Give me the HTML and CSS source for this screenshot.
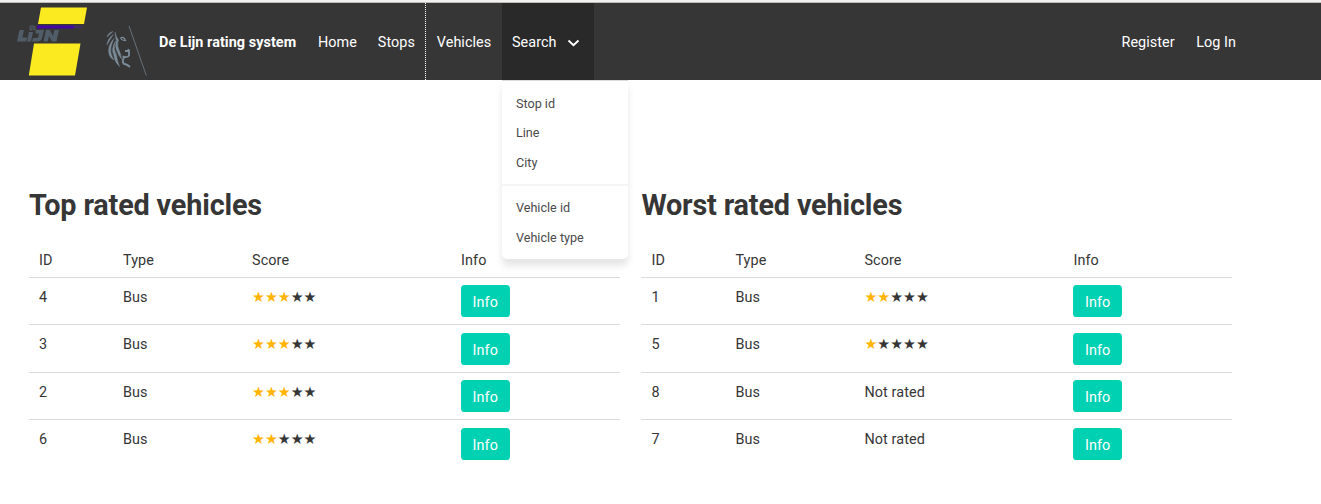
FILE: index.html
```html
<!DOCTYPE html>
<html lang="en">
<head>
<meta charset="utf-8">
<title>De Lijn rating system</title>
<link rel="stylesheet" href="styles.css">
</head>
<body>
<nav class="navbar">
  <svg class="logo" width="149" height="77" viewBox="0 3 149 77">
    <path fill="#fcea20" d="M41 7.500H87L84 24H38zM34 43.500H80.500L75 75.500H28.800z"/>
    <path stroke="#4507a3" stroke-width="3" d="M37 27H74"/>
    <path stroke="#412c67" stroke-width="2" d="M74 27H82"/>
    <g fill="#505d68">
      <path d="M19.500 30H24L22.300 37.500H27L26.200 41.500H17zM29 32H33L31 41.500H27zM36 30H44L42 38Q41 41.500 37.500 41.500H32L33 38H36.500Q38 38 38.300 36.500L39 33.500H35.500zM46 30H50L53 36L54.400 30H59L56.500 41.500H52L49 36L47.800 41.500H43.500z"/>
      <path d="M29.500 28.800h3v1.500h-3zM33.500 28.800h2.500v1.500h-2.500z"/>
    </g>
    <path fill="none" stroke="#505d68" d="M30 26h4v2h-4zM35 26v2"/>
    <g fill="#7c8b98" stroke="#7c8b98" stroke-width=".4">
      <path d="M113 31.500Q108 32.500 107.200 37Q109.500 34.500 113 31.500M113.500 34.500Q107.500 38.500 107 45Q109 41 113.500 34.500M114 38.500Q107 46 109 54Q110 58 114 60Q109.500 53 111 47Q112 43 114 38.500"/>
      <path d="M115.500 41Q110.500 49 114 56Q114.500 62 119.500 66.500Q117 60 116.500 55Q113 49 115.500 41M115 32Q116 37 118.500 40Q116.500 45 119 50Q121 54 121.500 59Q118 55 117 51Q114.500 46 116.500 41Q115 37 115 32"/>
    </g>
    <path fill="none" stroke="#7c8b98" stroke-width="1.200" d="M120.500 38Q124 36 125.500 40.500Q122 41 120.500 38"/>
    <path fill="none" stroke="#7c8b98" stroke-width="1.900" d="M128.500 49V51H125M129 50V55.500Q128 58 122.500 56.500M124 58Q121.500 61 124 64Q126 63.500 130 67"/>
    <path stroke="#65717b" fill="none" d="M129 26L146.300 75.500"/>
  </svg>
  <a class="item brand">De Lijn rating system</a>
  <a class="item home">Home</a>
  <a class="item stops">Stops</a>
  <a class="item vehicles">Vehicles</a>
  <div class="search">
    <a class="item search-link">Search
      <svg class="chevron" width="13" height="9" viewBox="0 0 13 9"><path d="M1.500 1.500L6.500 6.300L11.500 1.500" fill="none" stroke="#fff" stroke-width="1.900"/></svg>
    </a>
    <div class="dropdown">
      <a>Stop id</a><a>Line</a><a>City</a>
      <hr>
      <a>Vehicle id</a><a>Vehicle type</a>
    </div>
  </div>
  <div class="account">
    <a class="item">Register</a>
    <a class="item">Log In</a>
  </div>
</nav>
<main class="columns">
  <section>
    <h2>Top rated vehicles</h2>
    <table>
      <tr><th class="id">ID</th><th class="type">Type</th><th class="score">Score</th><th>Info</th></tr>
      <tr><td>4</td><td>Bus</td><td><span class="stars"><b>★★★</b>★★</span></td><td class="action"><a class="button">Info</a></td></tr>
      <tr><td>3</td><td>Bus</td><td><span class="stars"><b>★★★</b>★★</span></td><td class="action"><a class="button">Info</a></td></tr>
      <tr><td>2</td><td>Bus</td><td><span class="stars"><b>★★★</b>★★</span></td><td class="action"><a class="button">Info</a></td></tr>
      <tr><td>6</td><td>Bus</td><td><span class="stars"><b>★★</b>★★★</span></td><td class="action"><a class="button">Info</a></td></tr>
    </table>
  </section>
  <section>
    <h2>Worst rated vehicles</h2>
    <table>
      <tr><th class="id">ID</th><th class="type">Type</th><th class="score">Score</th><th>Info</th></tr>
      <tr><td>1</td><td>Bus</td><td><span class="stars"><b>★★</b>★★★</span></td><td class="action"><a class="button">Info</a></td></tr>
      <tr><td>5</td><td>Bus</td><td><span class="stars"><b>★</b>★★★★</span></td><td class="action"><a class="button">Info</a></td></tr>
      <tr><td>8</td><td>Bus</td><td>Not rated</td><td class="action"><a class="button">Info</a></td></tr>
      <tr><td>7</td><td>Bus</td><td>Not rated</td><td class="action"><a class="button">Info</a></td></tr>
    </table>
  </section>
</main>
</body>
</html>
```
FILE: styles.css
```css
* { box-sizing: border-box; }
body {
  margin: 0;
  height: 504px;
  overflow: hidden;
  border-top: 2px solid #f2f1f0;
  background: #fff;
  color: #363636;
  font: 14.4px/21.6px Roboto, sans-serif;
}
.navbar {
  display: flex;
  height: 78px;
  border-top: 1px solid #bdbcbb;
  background: #363636;
  color: #fff;
  letter-spacing: .05px;
}
.logo { flex: none; }
.item {
  display: flex;
  align-items: center;
  height: 77px;
  padding: 2px 10.8px 0;
  white-space: nowrap;
}
.brand { width: 159px; padding-left: 10px; padding-right: 0; font-weight: 700; }
.home { width: 59px; padding-left: 10px; }
.stops { width: 59px; border-right: 1px dotted #fff; }
.vehicles { width: 76px; }
.search { position: relative; width: 92px; }
.search-link { background: #292929; padding-left: 10px; }
.chevron { margin-left: 10px; margin-top: 1px; }
.dropdown {
  position: absolute;
  z-index: 2;
  top: 77px;
  left: 0;
  width: 126px;
  height: 179px;
  padding-top: 8px;
  border-top: 1px solid #dbdbdb;
  border-radius: 0 0 5px 5px;
  background: #fff;
  box-shadow: 0 7px 7px rgba(10, 10, 10, .1);
}
.dropdown a {
  display: block;
  height: 29.400px;
  padding: 5px 14px;
  color: #4a4a4a;
  font-size: 12.600px;
  line-height: 19px;
  letter-spacing: 0;
}
.dropdown hr { height: 2px; margin: 6.600px 0 7px; border: 0; background: #f5f5f5; }
.dropdown hr + a { height: 30.200px; }
.account { display: flex; margin-left: auto; padding-right: 74.200px; }
.columns { display: flex; gap: 21.400px; padding: 109px 0 0 29px; }
section { width: 591px; }
h2 { margin: 0 0 20.500px; font-size: 28.800px; line-height: 33px; font-weight: 700; letter-spacing: -.16px; }
table { width: 591px; table-layout: fixed; border-collapse: separate; border-spacing: 0; letter-spacing: .1px; }
th, td {
  height: 47.500px;
  padding: 9px 10px 0;
  border-bottom: 1px solid #dbdbdb;
  font-weight: 400;
  text-align: left;
  vertical-align: top;
}
th { height: 35.400px; padding-top: 7px; }
.action { padding-top: 7.600px; }
tr:last-child td { border-bottom: 0; }
.id { width: 84px; }
.type { width: 129px; }
.score { width: 209px; }
.stars { display: block; height: 21.600px; font-family: "DejaVu Sans", sans-serif; font-size: 14.400px; letter-spacing: 0; }
.stars b { color: #ffb400; font-weight: 400; }
.button {
  display: block;
  width: 48.600px;
  height: 32px;
  border-radius: 3.600px;
  background: #00d1b2;
  color: #fff;
  line-height: 35px;
  text-align: center;
}
```
